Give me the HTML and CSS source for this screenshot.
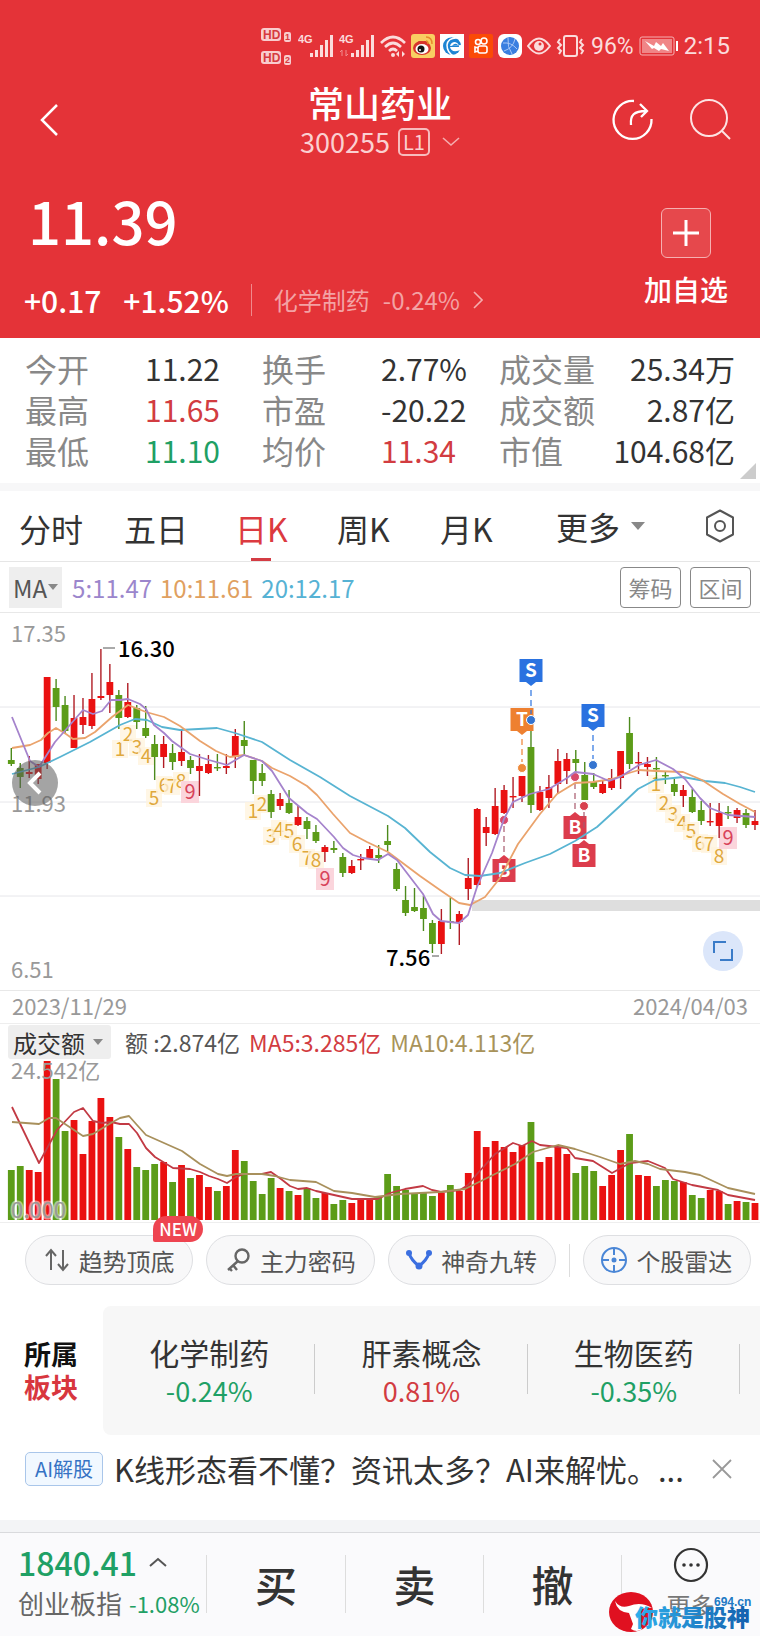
FILE: index.html
```html
<!DOCTYPE html>
<html lang="zh-CN">
<head>
<meta charset="utf-8">
<meta name="viewport" content="width=device-width, initial-scale=1">
<title>常山药业 300255</title>
<link rel="stylesheet" href="styles.css">
</head>
<body>
<header class="quote-head">
  <div class="status">
    <svg class="ic" width="32" height="40" viewBox="0 0 32 40">
      <g fill="#f9cdce"><rect x="0" y="2" width="20" height="13" rx="3"/><rect x="0" y="25" width="20" height="13" rx="3"/><rect x="23" y="6" width="7" height="10" rx="2"/><rect x="23" y="29" width="7" height="10" rx="2"/></g>
      <g class="tiny-hd"><text x="2" y="13">HD</text><text x="2" y="36">HD</text></g>
      <g class="tiny-num"><text x="24" y="14">1</text><text x="24" y="37">2</text></g>
    </svg>
    <svg class="ic" width="36" height="24" viewBox="0 0 36 24">
      <text class="tiny-g" x="0" y="9">4G</text>
      <g fill="#fbdcdc"><rect x="12" y="19" width="3" height="4"/><rect x="17" y="16" width="3" height="7"/><rect x="22" y="11" width="3" height="12"/><rect x="27" y="6" width="3" height="17"/><rect x="32" y="1" width="3" height="22"/></g>
    </svg>
    <svg class="ic" width="36" height="24" viewBox="0 0 36 24">
      <text class="tiny-g" x="0" y="9">4G</text>
      <path d="M3 22v-6l-2 2M7 16v6l2-2" fill="none" stroke="#f18d8e"/>
      <g fill="#fbdcdc"><rect x="12" y="19" width="3" height="4"/><rect x="17" y="16" width="3" height="7"/><rect x="22" y="11" width="3" height="12"/><rect x="27" y="6" width="3" height="17"/><rect x="32" y="1" width="3" height="22"/></g>
    </svg>
    <svg class="ic" width="26" height="24" viewBox="0 0 26 24">
      <path d="M1 9Q13-3 25 9M5 13Q13 5 21 13M9 17Q13 13 17 17" fill="none" stroke="#fbdcdc" stroke-width="2.6"/>
      <circle cx="13" cy="21" r="2" fill="#fbdcdc"/><path d="M19 17l-3 3 3 3zM22 17l3 3-3 3z" fill="#fbdcdc"/>
    </svg>
    <svg class="ic app" width="24" height="24" viewBox="0 0 24 24">
      <rect width="24" height="24" rx="3" fill="#f9cf62"/><ellipse cx="11" cy="14" rx="9" ry="7" fill="#d8342c"/><path d="M4 11Q8 5 11 8Q16 5 16 10" fill="#d8342c"/><ellipse cx="11" cy="15" rx="6.500" ry="5" fill="#fff"/><circle cx="10" cy="15" r="3.500" fill="#161616"/><circle cx="9" cy="16" r="1" fill="#fff"/><path d="M15 3q6 0 6 7M15 7q2 0 2 3" fill="none" stroke="#e8892c" stroke-width="1.500"/>
    </svg>
    <svg class="ic app" width="24" height="24" viewBox="0 0 24 24">
      <rect width="24" height="24" fill="#fff"/><circle cx="12" cy="12" r="9" fill="#1d84d3"/><path d="M3 7Q9 0 16 4Q8 4 7 11Q7 19 14 22" fill="none" stroke="#fff" stroke-width="1.500"/><path d="M10 12q1-4 5-4 4 1 4 5H10q1 5 7 4l4-1v-5" fill="#fff"/><path d="M12 12q3-4 6-1z" fill="#1d84d3"/>
    </svg>
    <svg class="ic app" width="24" height="24" viewBox="0 0 24 24">
      <rect width="24" height="24" rx="2" fill="#fb4a06"/><g fill="none" stroke="#fff" stroke-width="1.600"><circle cx="9" cy="8" r="2.500"/><circle cx="15" cy="7" r="3"/><rect x="9" y="12" width="9" height="7" rx="2"/><path d="M9 14l-3-1v5l3-1"/></g>
    </svg>
    <svg class="ic app" width="24" height="24" viewBox="0 0 24 24">
      <rect width="24" height="24" rx="6" fill="#fff"/><circle cx="12" cy="12" r="9" fill="#3a7fe0"/><path d="M5 9Q13 8 19 15M10 4Q9 13 14 20M17 5Q15 14 6 17" fill="none" stroke="#a9c8f6"/>
    </svg>
    <svg class="ic" width="24" height="24" viewBox="0 0 24 24">
      <path d="M1 12Q12-3 23 12Q12 27 1 12Z" fill="none" stroke="#fbdcdc" stroke-width="2"/><circle cx="12" cy="12" r="5" fill="#fbdcdc"/><circle cx="13" cy="10" r="1.500" fill="#e43338"/>
    </svg>
    <svg class="ic" width="30" height="24" viewBox="0 0 30 24">
      <rect x="8" y="2" width="13" height="20" rx="2" fill="none" stroke="#fbdcdc" stroke-width="2"/><path d="M4 5l-2 3 3 3-3 3 3 3-2 3M26 5l-2 3 3 3-3 3 3 3-2 3" fill="none" stroke="#fbdcdc" stroke-width="2"/>
    </svg>
    <span class="batt-text">96%</span>
    <svg class="ic" width="40" height="20" viewBox="0 0 40 20">
      <rect x="1" y="1" width="34" height="18" rx="2" fill="none" stroke="#f6b0b1"/><rect x="3" y="3" width="30" height="14" fill="#f08587"/><path d="M6 5l9 5 2-4 5 4 2-3 6 8-8-2-2 2-5-3-2 1z" fill="#fff"/><rect x="37" y="5" width="2" height="10" fill="#fff"/>
    </svg>
    <time class="clock">2:15</time>
  </div>

  <div class="titlebar">
    <button class="icon-btn back" aria-label="返回"><svg width="20" height="34" viewBox="0 0 20 34"><path d="M18 2L3 17l15 15" fill="none" stroke="#fff" stroke-width="2.500"/></svg></button>
    <div class="title">
      <h1>常山药业</h1>
      <button class="code">300255<span class="level">L1</span><svg width="18" height="10" viewBox="0 0 18 10"><path d="M1 1l8 7 8-7" fill="none" stroke="#f5adae" stroke-width="1.600"/></svg></button>
    </div>
    <div class="title-actions">
      <button class="icon-btn" aria-label="分享"><svg width="42" height="42" viewBox="0 0 42 42"><g fill="none" stroke="#fff" stroke-width="2.300"><path d="M22 2A19 19 0 1 0 39.500 20"/><path d="M19 26C18 16 22 12 34 12M28 5l7 7-6 6"/></g></svg></button>
      <button class="icon-btn" aria-label="搜索"><svg width="42" height="42" viewBox="0 0 42 42"><g fill="none" stroke="#fde3e3" stroke-width="2"><circle cx="19" cy="19" r="18"/><path d="M32 32l8 8"/></g></svg></button>
    </div>
  </div>

  <div class="price-row">
    <div class="price-block">
      <p class="price">11.39</p>
      <div class="change">
        <span>+0.17</span><span>+1.52%</span>
        <a class="sector" href="#sector"><span>化学制药</span><span>-0.24%</span><svg width="10" height="20" viewBox="0 0 10 20"><path d="M1 2l8 8-8 8" fill="none" stroke="#f5adae" stroke-width="1.600"/></svg></a>
      </div>
    </div>
    <button class="favorite"><span class="plus"><svg width="26" height="26" viewBox="0 0 26 26"><path d="M13 0v26M0 13h26" stroke="#fff" stroke-width="3"/></svg></span>加自选</button>
  </div>
</header>

<main>
  <section class="stats">
    <dl class="stat-grid">
      <dt>今开</dt><dd>11.22</dd><dt>换手</dt><dd>2.77%</dd><dt>成交量</dt><dd>25.34万</dd>
      <dt>最高</dt><dd class="up">11.65</dd><dt>市盈</dt><dd>-20.22</dd><dt>成交额</dt><dd>2.87亿</dd>
      <dt>最低</dt><dd class="down">11.10</dd><dt>均价</dt><dd class="up">11.34</dd><dt>市值</dt><dd>104.68亿</dd>
    </dl>
  </section>

  <nav class="tabs">
    <button>分时</button><button>五日</button><button class="active">日K</button><button>周K</button><button>月K</button>
    <button class="more">更多<i class="caret"></i></button>
    <button class="gear" aria-label="设置"><svg width="32" height="34" viewBox="0 0 32 34"><g fill="none" stroke="#555" stroke-width="2"><path d="M16 1.500L29 8.500v17L16 32.500 3 25.500v-17Z" stroke-linejoin="round"/><circle cx="16" cy="17" r="5"/></g></svg></button>
  </nav>

  <div class="ma-row">
    <button class="ma-select">MA<i class="caret small"></i></button>
    <span class="ma5">5:11.47</span><span class="ma10">10:11.61</span><span class="ma20">20:12.17</span>
    <div class="ma-tools"><button>筹码</button><button>区间</button></div>
  </div>

  <div class="k-chart">
    <svg id="price-chart" viewBox="0 612 760 377" role="img" aria-label="日K线"></svg>
    <button class="prev" aria-label="向前"><svg width="16" height="24" viewBox="0 0 16 24"><path d="M13 2L3 12l10 10" fill="none" stroke="#fff" stroke-width="4"/></svg></button>
    <button class="expand" aria-label="全屏"><svg width="20" height="20" viewBox="0 0 20 20"><path d="M1 12V1h12M19 8v11H7" fill="none" stroke="#3a7bc8" stroke-width="2"/></svg></button>
  </div>
  <div class="dates"><time>2023/11/29</time><time>2024/04/03</time></div>

  <div class="vol-head">
    <button class="vol-select">成交额<i class="caret small"></i></button>
    <span class="amount">额 :2.874亿</span><span class="vma5">MA5:3.285亿</span><span class="vma10">MA10:4.113亿</span>
  </div>
  <div class="v-chart"><svg id="volume-chart" viewBox="0 1059 760 162" role="img" aria-label="成交额"></svg></div>

  <div class="chips">
    <button class="chip"><svg width="26" height="24" viewBox="0 0 26 24"><path d="M7 22V3M2 8l5-6 5 6M19 2v19M14 16l5 6 5-6" fill="none" stroke="#666" stroke-width="2"/></svg>趋势顶底<b class="new">NEW</b></button>
    <button class="chip"><svg width="26" height="24" viewBox="0 0 26 24"><g fill="none" stroke="#666" stroke-width="2.400"><circle cx="17" cy="8" r="6.500"/><path d="M13 13L3 22M8 17l4 5M4 20l3 3"/></g></svg>主力密码</button>
    <button class="chip"><svg width="26" height="24" viewBox="0 0 26 24"><path d="M3 5Q5 12 13 18Q21 12 23 5" fill="none" stroke="#3b6fe0" stroke-width="3"/><g fill="#3b6fe0"><circle cx="3" cy="5" r="3"/><circle cx="23" cy="5" r="3"/><circle cx="13" cy="18" r="3.500"/></g></svg>神奇九转</button>
    <i class="chip-sep"></i>
    <button class="chip"><svg width="26" height="26" viewBox="0 0 26 26"><g fill="none" stroke="#4a86d6" stroke-width="2"><circle cx="13" cy="13" r="12"/><path d="M13 1v7M13 18v7M1 13h7M18 13h7"/></g><circle cx="13" cy="13" r="2.500" fill="#4a86d6"/></svg>个股雷达</button>
  </div>

  <section class="boards" id="sector">
    <h2>所属<em>板块</em></h2>
    <div class="board-list">
      <a class="board" href="#b1"><span>化学制药</span><strong class="down">-0.24%</strong></a>
      <a class="board" href="#b2"><span>肝素概念</span><strong class="up">0.81%</strong></a>
      <a class="board" href="#b3"><span>生物医药</span><strong class="down">-0.35%</strong></a>
    </div>
  </section>

  <section class="ai">
    <span class="ai-tag">AI解股</span>
    <a class="ai-text" href="#ai">K线形态看不懂？资讯太多？AI来解忧。...</a>
    <button class="icon-btn" aria-label="关闭"><svg width="20" height="20" viewBox="0 0 20 20"><path d="M1 1l18 18M19 1L1 19" stroke="#999" stroke-width="1.800"/></svg></button>
  </section>
</main>

<footer class="dock">
  <button class="index">
    <span class="index-value">1840.41<svg width="18" height="10" viewBox="0 0 18 10"><path d="M1 9l8-7 8 7" fill="none" stroke="#555" stroke-width="2"/></svg></span>
    <span class="index-name">创业板指<small>-1.08%</small></span>
  </button>
  <button class="trade">买</button>
  <button class="trade">卖</button>
  <button class="trade">撤</button>
  <button class="dock-more"><svg width="36" height="36" viewBox="0 0 36 36"><circle cx="18" cy="18" r="16" fill="none" stroke="#333" stroke-width="2.200"/><g fill="#333"><circle cx="11" cy="18" r="1.800"/><circle cx="18" cy="18" r="1.800"/><circle cx="25" cy="18" r="1.800"/></g></svg>更多</button>
  <svg class="mark" width="152" height="46" viewBox="0 0 152 46">
    <defs><linearGradient id="mk" x1="0" x2="1"><stop offset="0" stop-color="#2fb0ec"/><stop offset="1" stop-color="#1560ae"/></linearGradient></defs>
    <ellipse cx="25" cy="23" rx="22" ry="20" fill="#e01020"/>
    <path d="M9 12Q14 20 23 17Q35 12 46 19Q38 17 34 22L33 34L36 40Q31 44 25 40L27 35L23 24Q11 23 9 12Z" fill="#fff"/>
    <text class="mark-url" x="108" y="17">694.cn</text>
    <text class="mark-name" x="29" y="37" fill="url(#mk)">你就是股神</text>
  </svg>
</footer>
<script src="chart.js"></script>
</body>
</html>
```

FILE: styles.css
```css
* { box-sizing: border-box; }
body, h1, h2, p, dl, dd { margin: 0; }
body {
  background: #fff;
  color: #333;
  font-family: "Noto Sans CJK SC", "Noto Sans", sans-serif;
  font-size: 24px;
  overflow-x: hidden;
}
button {
  font: inherit;
  color: inherit;
  background: none;
  border: 0;
  padding: 0;
  white-space: nowrap;
}
a { color: inherit; text-decoration: none; }
svg { display: block; flex: none; }
.up { color: #d23c41; }
.down { color: #1fa065; }
.icon-btn { display: flex; }

/* Header */
.quote-head { background: #e43338; color: #fff; padding: 26px 24px 0; }
.status {
  display: flex;
  align-items: center;
  justify-content: flex-end;
  gap: 5px;
  padding-right: 6px;
  height: 40px;
  color: #fbdcdc;
}
.tiny-hd { font: 700 12px "Liberation Sans", sans-serif; fill: #d63a3f; }
.tiny-num { font: 700 9px "Liberation Sans", sans-serif; fill: #d63a3f; }
.tiny-g { font: 700 11px "Liberation Sans", sans-serif; fill: #fbdcdc; }
.batt-text { font-family: Roboto, sans-serif; font-size: 23px; }
.clock { font-family: Roboto, sans-serif; font-size: 24px; }

.titlebar {
  display: grid;
  grid-template-columns: 1fr auto 1fr;
  align-items: center;
  height: 108px;
}
.back { padding-left: 15px; }
.title { display: flex; flex-direction: column; align-items: center; }
.title h1 { font-size: 36px; font-weight: 500; line-height: 44px; }
.code { display: flex; align-items: center; font-size: 27px; line-height: 36px; color: #fbd0d1; }
.level {
  margin: 0 12px 0 8px;
  width: 32px;
  border: 2px solid #f7bcbd;
  border-radius: 5px;
  font-size: 20px;
  line-height: 24px;
  text-align: center;
}
.title-actions { display: flex; justify-content: flex-end; gap: 36px; padding-right: 4px; }

.price-row { display: flex; justify-content: space-between; padding: 6px 8px 0 0; height: 164px; }
.price { font-size: 58px; font-weight: 500; line-height: 80px; padding-left: 4px; }
.change {
  display: flex;
  align-items: center;
  gap: 22px;
  padding-top: 24px;
  font-size: 30px;
  font-weight: 500;
  line-height: 32px;
}
.sector {
  display: flex;
  align-items: center;
  gap: 13px;
  padding-left: 22px;
  border-left: 1px solid #f08a8c;
  color: #f3a2a4;
  font-size: 24px;
  font-weight: 400;
}
.favorite {
  display: flex;
  flex-direction: column;
  align-items: center;
  gap: 14px;
  padding-top: 28px;
  font-size: 28px;
  font-weight: 500;
  line-height: 34px;
}
.plus {
  display: grid;
  place-items: center;
  width: 50px;
  height: 50px;
  border: 1px solid #f6b0b1;
  border-radius: 6px;
  background: #e6484c;
}

/* Key figures */
.stats { position: relative; padding: 10px 25px 12px; border-bottom: 8px solid #f7f7f8; }
.stats::after {
  content: "";
  position: absolute;
  right: 4px;
  bottom: 4px;
  border-left: 16px solid transparent;
  border-bottom: 16px solid #ccc;
}
.stat-grid {
  display: grid;
  grid-template-columns: 120fr 117fr 119fr 118fr 100fr 136fr;
  line-height: 41px;
  white-space: nowrap;
}
.stat-grid dt { font-size: 32px; color: #888; }
.stat-grid dd { font-size: 30px; }
.stat-grid dd:nth-of-type(3n) { justify-self: end; }

/* Period tabs */
.tabs {
  display: grid;
  grid-template-columns: 105fr 111fr 102fr 103fr 116fr 148fr 32px;
  justify-items: start;
  padding: 0 24px 0 19px;
  height: 71px;
  border-bottom: 1px solid #e6e6e6;
  font-size: 32px;
}
.tabs button { position: relative; line-height: 74px; height: 70px; }
.tabs .active { color: #dc3a40; }
.tabs .active::after {
  content: "";
  position: absolute;
  left: 50%;
  bottom: 0;
  width: 20px;
  height: 3px;
  margin-left: -10px;
  background: #d43c44;
}
.tabs .more, .tabs .gear { display: flex; align-items: center; }
.caret {
  margin-left: 11px;
  border: 7px solid transparent;
  border-top: 8px solid #888;
  border-bottom: 0;
}
.caret.small { border-width: 6px 5px 0; margin-left: 8px; }

.ma-row { display: flex; align-items: center; gap: 8px; height: 50px; padding: 0 9px; }
.ma-select {
  display: flex;
  align-items: center;
  height: 41px;
  padding: 0 4px;
  margin-right: 2px;
  background: #eee;
  color: #555;
}
.ma-select .caret { margin-left: 1px; }
.ma5 { color: #9b86cc; }
.ma10 { color: #e0a060; }
.ma20 { color: #56b2d4; }
.ma-tools { display: flex; gap: 9px; margin-left: auto; }
.ma-tools button {
  width: 61px;
  height: 41px;
  border: 1px solid #888;
  border-radius: 4px;
  color: #888;
  font-size: 22px;
}

/* Charts */
.k-chart { position: relative; border: 1px solid #e8e8e8; border-width: 1px 0; }
.k-chart > svg, .v-chart > svg { width: 100%; height: auto; overflow: visible; }
.prev, .expand {
  position: absolute;
  display: grid;
  place-items: center;
  border-radius: 50%;
}
.prev { left: 12px; top: 39%; width: 46px; height: 46px; background: rgba(90, 90, 90, .55); }
.expand { right: 17px; bottom: 19px; width: 40px; height: 40px; background: #dbe6fa; }
.axis { font-size: 22px; fill: #999; }
.peak { font-size: 22px; font-weight: 500; fill: #000; }
.turn { font-size: 19px; fill: #dfa83c; text-anchor: middle; }
.turn-nine { font-size: 20px; fill: #d8435a; text-anchor: middle; }
.flag { font-size: 19px; font-weight: 700; fill: #fff; text-anchor: middle; }
.outlined { stroke: #fff; stroke-width: 3px; stroke-opacity: .5; paint-order: stroke; }
.dates {
  display: flex;
  justify-content: space-between;
  padding: 0 12px 4px;
  border-bottom: 1px solid #eee;
  color: #999;
  font-size: 22px;
  line-height: 28px;
}
.vol-head { display: flex; align-items: center; gap: 9px; height: 36px; padding: 0 8px; font-size: 23px; white-space: nowrap; }
.vol-select {
  display: flex;
  align-items: center;
  height: 34px;
  margin-right: 5px;
  padding: 0 8px 0 5px;
  border-radius: 3px;
  background: #eee;
  font-size: 24px;
}
.amount { color: #555; }
.vma5 { color: #d23c41; }
.vma10 { color: #a8935a; }
.v-chart { border-bottom: 1px solid #eee; }

/* Shortcuts */
.chips { display: flex; align-items: center; gap: 13px; padding: 12px 9px 21px 25px; }
.chip {
  position: relative;
  display: flex;
  flex: 1 1 0;
  align-items: center;
  justify-content: center;
  gap: 9px;
  height: 50px;
  border: 1px solid #dedfe2;
  border-radius: 25px;
  background: #f8f8f9;
  color: #555;
}
.new {
  position: absolute;
  right: -11px;
  top: -20px;
  width: 50px;
  border-radius: 13px 13px 13px 2px;
  background: #ee4450;
  color: #fff;
  font-size: 17px;
  font-weight: 500;
  line-height: 26px;
  text-align: center;
}
.chip-sep { width: 1px; height: 33px; background: #ddd; }

/* Boards */
.boards { display: flex; align-items: center; overflow: hidden; }
.boards h2 { flex: none; width: 103px; padding: 0 0 2px 24px; font-size: 27px; line-height: 33px; font-weight: 700; color: #111; }
.boards em { display: block; font-style: normal; color: #d8363e; }
.board-list { display: flex; flex: 1; height: 129px; border-radius: 8px 0 0 8px; background: #f7f7f7; padding-right: 20px; }
.board { position: relative; flex: 1; padding-top: 26px; text-align: center; font-size: 30px; line-height: 40px; }
.board::after { content: ""; position: absolute; right: 0; top: 38px; height: 50px; border-right: 1px solid #ccc; }
.board strong { display: block; font-size: 27px; font-weight: 400; line-height: 38px; }

/* Assistant line */
.ai { display: flex; align-items: center; gap: 11px; height: 85px; padding: 0 28px 18px 25px; }
.ai-tag {
  width: 78px;
  border: 1px solid #a9c6ea;
  border-radius: 5px;
  background: #f1f8ff;
  color: #3673c4;
  font-size: 20px;
  line-height: 32px;
  text-align: center;
  white-space: nowrap;
}
.ai-text { flex: 1; font-size: 31px; line-height: 48px; white-space: nowrap; }

/* Bottom bar */
.dock {
  position: relative;
  display: grid;
  grid-template-columns: 206fr 139fr 138fr 138fr 139fr;
  align-items: center;
  height: 116px;
  border-top: 12px solid #f3f4f6;
  background: #fafafc;
  box-shadow: inset 0 1px #d9dadd;
}
.index { padding: 0 0 4px 18px; text-align: left; }
.index-value { display: flex; align-items: center; gap: 12px; color: #1fa065; font-size: 32px; font-weight: 500; line-height: 42px; }
.index-name { display: flex; align-items: center; gap: 7px; color: #666; font-size: 26px; line-height: 40px; }
.index-name small { color: #1fa065; font-size: 22px; }
.trade { height: 58px; border-left: 1px solid #ddd; font-size: 42px; font-weight: 500; line-height: 56px; }
.dock-more { position: relative; display: flex; flex-direction: column; align-items: center; gap: 5px; color: #777; font-size: 24px; line-height: 34px; }
.dock-more::before { content: ""; position: absolute; left: 0; top: 8px; height: 58px; border-left: 1px solid #ddd; }
.mark { position: absolute; right: 2px; bottom: 1px; }
.mark-url { font: 700 12px "Liberation Sans", sans-serif; fill: #2079c4; }
.mark-name { font-size: 23px; font-weight: 900; }
```

FILE: chart.js
```js
// Each candle: colour, open/close top, open/close bottom, high, low, turnover top.
const candles = `
g 759 763 747 765 1169|g 767 776 762 787 1165|r 771 773 755 777 1169|r 763 778 763 783 1171|r 676 762 676 768 1060
g 687 706 678 720 1078|g 704 730 695 732 1130|r 717 747 694 747 1119|r 716 724 697 733 1153|r 698 725 672 728 1120
r 695 697 648 699 1097|r 681 694 663 712 1116|g 694 717 689 728 1136|r 701 716 682 717 1148|g 707 721 704 728 1166
g 727 735 705 737 1169|g 743 756 734 779 1163|r 743 756 735 767 1161|g 752 761 743 769 1181|r 751 760 729 765 1164
g 759 767 755 773 1177|r 765 770 753 795 1174|r 763 772 754 773 1186|g 766 767 753 770 1190|r 765 767 753 773 1185
r 735 756 728 767 1149|g 739 745 720 755 1160|g 759 780 759 793 1180|g 772 780 763 785 1193|g 793 811 789 817 1177
r 798 805 792 809 1187|g 802 812 789 813 1190|r 816 824 805 825 1194|g 820 828 816 838 1187|g 831 840 824 842 1197
r 846 851 844 861 1192|g 847 849 840 852 1203|g 856 872 852 876 1199|r 865 872 859 873 1202|r 858 859 853 869 1199
r 848 857 845 858 1197|g 854 857 844 862 1196|g 840 844 824 850 1173|g 868 888 862 890 1185|g 899 912 885 915 1189
g 906 910 887 911 1192|g 907 918 895 930 1192|g 922 943 919 952 1195|r 920 943 908 953 1192|g 920 921 897 928 1184
r 913 921 910 944 1190|r 877 888 857 899 1172|r 808 884 807 886 1130|r 826 832 816 845 1146|r 805 833 787 834 1140
r 789 812 784 813 1146|r 795 796 776 807 1151|r 775 795 775 801 1144|g 746 804 723 812 1121|r 791 809 785 810 1161
r 786 797 774 807 1156|r 760 783 748 792 1146|r 758 770 752 783 1153|g 758 762 749 773 1172|g 774 799 761 799 1165
g 781 786 772 788 1170|r 783 792 779 793 1185|r 777 787 768 789 1174|r 750 777 750 788 1149|g 732 763 716 768 1133
r 761 762 751 773 1174|r 763 766 756 775 1175|g 767 768 756 779 1185|g 774 775 771 783 1179|g 783 791 778 795 1180
r 789 795 784 806 1181|g 796 811 788 812 1194|g 809 820 800 824 1197|r 820 821 802 825 1189|r 812 825 802 837 1190
g 811 812 805 818 1203|r 809 817 807 822 1200|g 812 824 808 827 1201|r 820 824 809 829 1202`
  .trim().split(/[|\n]/).map(row => row.split(' '));

const priceLines = [
  ['#58b4d2', '12,773 39,766 60,756 90,741 120,724 135,718 147,719 162,726 180,729 217,727 235,732 262,741 290,759 320,776 350,795 388,815 405,827 430,851 450,867 465,874 480,875 500,872 525,862 550,853 575,840 597,826 620,805 638,788 655,779 683,776 705,780 725,782 740,786 755,791'],
  ['#eaa36c', '12,747 30,744 41,739 48,732 56,727 66,733 73,738 85,737 95,731 112,716 128,704 146,711 164,716 180,725 200,740 216,750 230,756 244,754 262,760 272,767 290,775 307,785 317,794 333,813 350,832 367,841 388,851 400,860 420,875 440,889 459,902 470,904 485,896 500,877 518,843 540,813 557,793 575,782 593,781 612,778 629,772 639,769 656,770 683,771 702,779 723,793 740,803 755,811'],
  ['#a583cc', '12,716 30,760 39,766 55,741 83,709 93,713 102,710 111,699 120,699 128,698 140,703 146,708 154,724 164,732 172,740 190,753 209,759 227,764 244,754 262,760 272,770 289,797 307,812 317,818 334,836 343,847 353,854 363,857 378,859 388,853 397,859 423,893 433,913 441,920 459,922 468,914 477,886 492,852 504,818 513,801 530,793 549,788 567,777 575,771 593,773 609,780 620,776 639,764 656,759 673,768 685,778 700,797 710,807 728,814 755,816']
];
const volumeLines = [
  ['#c23a44', '12,1106 39,1162 57,1129 74,1111 83,1107 93,1120 102,1122 111,1121 120,1123 129,1123 137,1132 146,1147 155,1156 173,1167 190,1168 200,1171 209,1175 218,1178 227,1182 236,1176 244,1173 262,1173 271,1171 281,1178 290,1185 298,1188 307,1187 316,1190 334,1194 352,1198 378,1198 390,1192 405,1188 423,1185 432,1189 441,1191 460,1189 468,1184 477,1173 495,1153 513,1142 522,1145 532,1140 540,1144 558,1146 567,1147 575,1157 593,1160 612,1172 630,1162 648,1160 665,1167 673,1178 692,1184 718,1189 728,1194 755,1199'],
  ['#a8905c', '12,1121 39,1123 49,1117 56,1117 65,1123 83,1135 93,1133 111,1122 120,1117 129,1115 137,1124 146,1134 155,1138 164,1142 182,1150 200,1163 218,1173 227,1175 236,1173 262,1173 275,1175 290,1179 316,1181 334,1190 352,1192 375,1196 400,1193 440,1191 465,1188 485,1178 515,1163 533,1151 558,1144 575,1148 600,1156 620,1163 635,1160 648,1163 660,1168 685,1171 700,1174 728,1187 755,1193']
];
// Nine-turn sequences: centre of each digit 1 to 9.
const turns = [
  [[120,748],[128,733],[137,746],[146,755],[154,797],[164,784],[172,785],[181,780],[190,791]],
  [[253,810],[262,803],[271,835],[279,828],[289,830],[297,843],[307,857],[316,859],[325,878]],
  [[656,783],[664,802],[673,813],[682,822],[691,830],[700,842],[709,843],[719,855],[728,837]]
];
// Trade flags: letter, centre x, top of flag, dot y, fill, dot fill.
const flags = [
  ['T', 522, 707, 767, '#ee8030', '#ee8a3a'],
  ['S', 531, 658, 719, '#2a72e0', '#3474d0'],
  ['S', 593, 703, 764, '#2a72e0', '#3474d0'],
  ['B', 504, 858, 819, '#dc3c4c', '#d8486c'],
  ['B', 575, 815, 776, '#dc3c4c', '#d8486c'],
  ['B', 584, 843, 805, '#dc3c4c', '#d8404e']
];

const candleX = i => 11.3 + 8.96 * i;
const paint = c => c === 'r' ? '#ea1111' : '#5c9c18';
const line = ([stroke, points]) =>
  `<polyline points="${points}" fill="none" stroke="${stroke}" stroke-width="1.8" stroke-linejoin="round"/>`;
const hLine = y => `<path d="M0 ${y}H760" stroke="#e6e6ea"/>`;

const bodies = candles.map(([c, top, bottom, high, low], i) => {
  const x = candleX(i);
  return `<path d="M${x} ${high}V${low}" stroke="${c === 'r' ? '#b01c24' : '#4c8a1c'}" stroke-width="1.4"/>` +
    `<rect x="${x - 3.4}" y="${top}" width="6.8" height="${Math.max(1.4, bottom - top)}" fill="${paint(c)}"/>`;
}).join('');

const digits = turns.map(seq => seq.map(([x, y], i) => i === 8
  ? `<rect x="${x - 9}" y="${y - 11}" width="18" height="22" fill="#fbd5dc"/><text class="turn-nine" x="${x}" y="${y + 7}">9</text>`
  : `<rect x="${x - 8}" y="${y - 9}" width="16" height="18" fill="#fff3dc" opacity=".75"/><text class="turn" x="${x}" y="${y + 7}">${i + 1}</text>`
).join('')).join('');

const marks = flags.map(([letter, x, top, dot, fill, dotFill]) => {
  const below = letter === 'B';
  const tip = below ? `M${x - 5} ${top}l5-4 5 4z` : `M${x - 5} ${top + 23}l5 4 5-4z`;
  const from = below ? dot + 6 : top + 31;
  const to = below ? top - 6 : dot - 6;
  const dash = to > from ? `<path d="M${x} ${from}V${to}" stroke="${below ? '#a8586c' : fill}" stroke-width="1.2" stroke-dasharray="6 4"/>` : '';
  return `<rect x="${x - 11.5}" y="${top}" width="23" height="23" fill="${fill}"/><path d="${tip}" fill="${fill}"/>` +
    `<text class="flag" x="${x}" y="${top + 18}">${letter}</text>${dash}` +
    `<circle cx="${x}" cy="${dot}" r="4.5" fill="${dotFill}" stroke="#fff" stroke-width="1"/>`;
}).join('');

document.getElementById('price-chart').innerHTML =
  [706, 801, 895].map(hLine).join('') +
  '<rect x="472" y="899" width="288" height="11" fill="#dedede"/>' +
  '<text class="axis" x="11" y="641">17.35</text><text class="axis" x="11" y="811">11.93</text><text class="axis" x="11" y="977">6.51</text>' +
  digits + bodies + marks + priceLines.map(line).join('') +
  '<path d="M103 647h12M432 955h7" stroke="#555"/>' +
  '<text class="peak" x="118" y="656">16.30</text><text class="peak" x="386" y="965">7.56</text>';

document.getElementById('volume-chart').innerHTML =
  candles.map((c, i) => `<rect x="${candleX(i) - 3.4}" y="${c[5]}" width="6.8" height="${1219 - c[5]}" fill="${paint(c[0])}"/>`).join('') +
  volumeLines.map(line).join('') +
  '<text class="axis" x="11" y="1078">24.542亿</text><text class="axis outlined" x="11" y="1217">0.000</text>';
```
